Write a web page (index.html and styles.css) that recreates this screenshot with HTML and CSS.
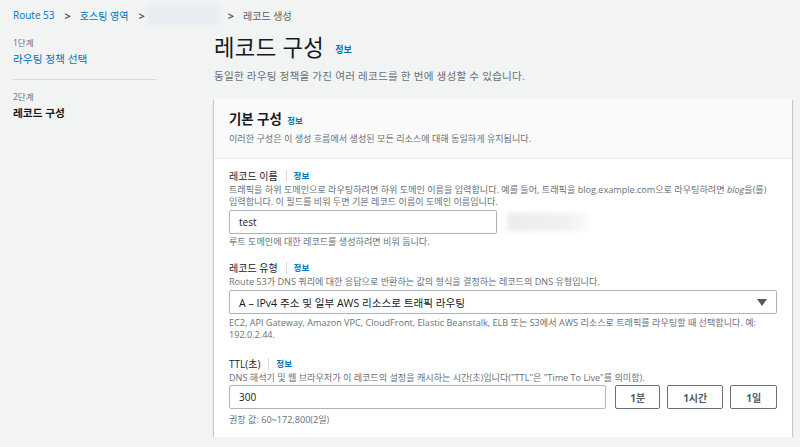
FILE: index.html
```html
<!DOCTYPE html>
<html lang="ko">
<head>
    <meta charset="UTF-8">
    <meta name="viewport" content="width=device-width, initial-scale=1.0">
    <title>레코드 생성</title>
    <link rel="stylesheet" href="styles.css">
</head>
<body>
    <nav class="breadcrumbs">
        <a href="#">Route 53</a>
        <span class="chevron">&gt;</span>
        <a href="#">호스팅 영역</a>
        <span class="chevron">&gt;</span>
        <span class="blurred-zone"></span>
        <span class="chevron">&gt;</span>
        <span class="current">레코드 생성</span>
    </nav>

    <div class="layout">
        <aside class="steps">
            <div class="step">
                <div class="step-num">1단계</div>
                <a href="#" class="step-link">라우팅 정책 선택</a>
            </div>
            <div class="step step-active">
                <div class="step-num">2단계</div>
                <div class="step-title">레코드 구성</div>
            </div>
        </aside>

        <main class="content">
            <h1 class="page-title">레코드 구성 <a href="#" class="info">정보</a></h1>
            <p class="page-desc">동일한 라우팅 정책을 가진 여러 레코드를 한 번에 생성할 수 있습니다.</p>

            <section class="card">
                <div class="card-header">
                    <h2>기본 구성 <a href="#" class="info">정보</a></h2>
                    <p>이러한 구성은 이 생성 흐름에서 생성된 모든 리소스에 대해 동일하게 유지됩니다.</p>
                </div>
                <div class="card-body">
                    <div class="field field-name">
                        <div class="label">레코드 이름 <span class="sep"></span><a href="#" class="info">정보</a></div>
                        <p class="desc">트래픽을 하위 도메인으로 라우팅하려면 하위 도메인 이름을 입력합니다. 예를 들어, 트래픽을 blog.example.com으로 라우팅하려면 <i>blog</i>을(를)<br>입력합니다. 이 필드를 비워 두면 기본 레코드 이름이 도메인 이름입니다.</p>
                        <div class="row">
                            <input class="input input-name" type="text" value="test">
                            <span class="blurred-domain"></span>
                        </div>
                        <p class="hint">루트 도메인에 대한 레코드를 생성하려면 비워 둡니다.</p>
                    </div>

                    <div class="field field-type">
                        <div class="label">레코드 유형 <span class="sep"></span><a href="#" class="info">정보</a></div>
                        <p class="desc">Route 53가 DNS 쿼리에 대한 응답으로 반환하는 값의 형식을 결정하는 레코드의 DNS 유형입니다.</p>
                        <div class="select">
                            <span>A – IPv4 주소 및 일부 AWS 리소스로 트래픽 라우팅</span>
                            <svg class="caret" width="10" height="8" viewBox="0 0 10 8"><path d="M0 0h10L5 7z" fill="#545b64"/></svg>
                        </div>
                        <p class="hint">EC2, API Gateway, Amazon VPC, CloudFront, Elastic Beanstalk, ELB 또는 S3에서 AWS 리소스로 트래픽를 라우팅할 때 선택합니다. 예:<br>192.0.2.44.</p>
                    </div>

                    <div class="field field-ttl">
                        <div class="label">TTL(초) <span class="sep"></span><a href="#" class="info">정보</a></div>
                        <p class="desc">DNS 해석기 및 웹 브라우저가 이 레코드의 설정을 캐시하는 시간(초)입니다("TTL"은 "Time To Live"를 의미함).</p>
                        <div class="row">
                            <input class="input input-ttl" type="text" value="300">
                            <button class="btn btn-min">1분</button>
                            <button class="btn btn-hour">1시간</button>
                            <button class="btn btn-day">1일</button>
                        </div>
                        <p class="hint">권장 값: 60~172,800(2일)</p>
                    </div>
                </div>
            </section>
        </main>
    </div>
</body>
</html>
```

FILE: styles.css
```css
body {
    margin: 0;
    background: #f2f3f3;
    color: #16191f;
    font-family: "Open Sans", "Noto Sans CJK KR", sans-serif;
    font-size: 10px;
}
a {
    color: #0073bb;
    text-decoration: none;
}
p, h1, h2 {
    margin: 0;
}

.breadcrumbs {
    height: 30px;
    display: flex;
    align-items: center;
    padding-left: 13px;
    font-size: 10px;
}
.chevron {
    color: #545b64;
    font-weight: bold;
    font-size: 11px;
    margin: 0 9px 0 10px;
}
.blurred-zone {
    width: 70px;
    height: 20px;
    background: #e6ecf0;
    filter: blur(2px);
    margin-left: -6px;
}
.current {
    color: #545b64;
}

.layout {
    display: flex;
}
.steps {
    width: 144px;
    margin-left: 13px;
    padding-top: 6px;
}
.step-num {
    font-size: 8.5px;
    line-height: 14px;
    color: #687078;
}
.step-link {
    display: block;
    font-size: 10.7px;
    line-height: 18px;
    padding-bottom: 11px;
    border-bottom: 1px solid #d5dbdb;
    margin-bottom: 10px;
}
.step-title {
    font-size: 10.7px;
    line-height: 18px;
    font-weight: bold;
    color: #16191f;
}

.content {
    margin-left: 57px;
    width: 578px;
}
.page-title {
    font-size: 22.3px;
    font-weight: normal;
    line-height: 30px;
    margin-top: 3px;
    letter-spacing: 0.3px;
}
.page-title .info {
    font-size: 9px;
    margin-left: 5px;
    letter-spacing: 0;
    vertical-align: 3px;
}
.info {
    font-weight: bold;
    font-size: 8.5px;
}
.page-desc {
    font-size: 10.6px;
    line-height: 16px;
    margin-top: 3px;
    color: #687078;
    letter-spacing: 0.2px;
}

.card {
    margin-top: 15px;
    background: #fff;
    box-shadow: 0 1px 1px 0 rgba(0, 28, 36, 0.3), 1px 1px 1px 0 rgba(0, 28, 36, 0.15), -1px 1px 1px 0 rgba(0, 28, 36, 0.15);
}
.card-header {
    background: #fafafa;
    border-bottom: 1px solid #eaeded;
    padding: 10px 15px 12px;
}
.card-header h2 {
    font-size: 13.4px;
    line-height: 20px;
}
.card-header h2 .info {
    margin-left: 2px;
    font-size: 8.5px;
}
.card-header p {
    font-size: 9.1px;
    line-height: 15px;
    color: #687078;
}

.card-body {
    padding: 9px 15px 11px;
}
.field-name {
    margin-bottom: 12px;
}
.field-type {
    margin-bottom: 15px;
}
.label {
    line-height: 16px;
    display: flex;
    align-items: center;
}
.sep {
    width: 1px;
    height: 12px;
    background: #d5dbdb;
    margin: 0 7px 0 8px;
}
.desc, .hint {
    font-size: 9.1px;
    line-height: 12px;
    color: #687078;
}
.desc {
    margin-bottom: 2px;
}
.field-ttl .desc {
    margin-bottom: 1px;
}
.hint {
    margin-top: 2px;
}
.field-type .hint {
    margin-top: 3px;
}
.field-ttl .hint {
    margin-top: 5px;
}

.row {
    display: flex;
    align-items: center;
}
.input {
    box-sizing: border-box;
    height: 24px;
    border: 1px solid #aab7b8;
    border-radius: 2px;
    padding: 0 9px;
    font-family: "Open Sans", "Noto Sans CJK KR", sans-serif;
    font-size: 10px;
    color: #16191f;
    background: #fff;
    outline: none;
}
.input-name {
    width: 268px;
}
.blurred-domain {
    width: 82px;
    height: 18px;
    margin-left: 10px;
    background: linear-gradient(to right, #ececec, #f0f0f0 70%, #fbfbfb);
    filter: blur(2px);
}
.input-ttl {
    width: 381px;
}

.select {
    box-sizing: border-box;
    height: 24px;
    border: 1px solid #aab7b8;
    border-radius: 2px;
    display: flex;
    align-items: center;
    justify-content: space-between;
    padding: 0 9px 0 9px;
    font-size: 10.6px;
}
.caret {
    margin-top: 1px;
}

.btn {
    box-sizing: border-box;
    height: 24px;
    border: 1px solid #687078;
    border-radius: 2px;
    background: #fff;
    color: #545b64;
    font-family: "Open Sans", "Noto Sans CJK KR", sans-serif;
    font-size: 10px;
    font-weight: bold;
    padding: 0;
    margin-left: 7px;
}
.btn-min {
    width: 45px;
    margin-left: 9px;
}
.btn-hour {
    width: 57px;
}
.btn-day {
    width: 47px;
}
```
